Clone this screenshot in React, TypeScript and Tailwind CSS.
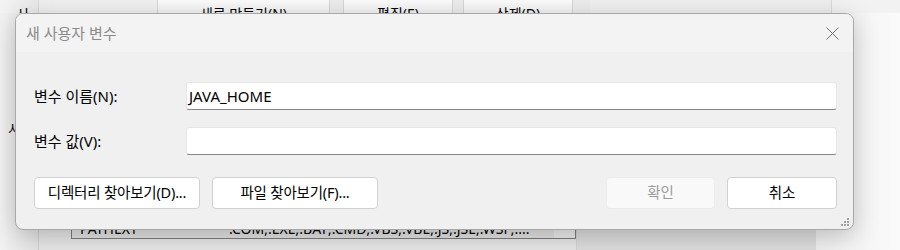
const ui = {
  fontFamily: '"Segoe UI", "Noto Sans", "Noto Sans CJK KR", sans-serif',
};

function BgButton({ label, className }: { label: string; className: string }) {
  return (
    <div
      className={`h-[13px] overflow-hidden border-x border-[#d6d6d6] bg-gradient-to-b from-[#fbfbfb] to-[#f2f2f2] text-center text-[14px] leading-[20px] text-black ${className}`}
    >
      <div className="pt-[4px]">{label}</div>
    </div>
  );
}

function Field({ label, value }: { label: string; value?: string }) {
  return (
    <div className="flex items-center">
      <label className="w-[152px] text-[15px] text-black">{label}</label>
      <div className="flex h-[28px] flex-1 items-center rounded-[3px] border border-[#e6e6e6] border-b-[#868686] bg-white px-[2px] text-[15px] text-black">
        {value}
      </div>
    </div>
  );
}

function DialogButton({
  children,
  className,
  disabled,
}: {
  children: React.ReactNode;
  className: string;
  disabled?: boolean;
}) {
  return (
    <button
      disabled={disabled}
      className={`h-[32px] whitespace-nowrap rounded-[4px] border text-[14.5px] tracking-[-0.2px] ${
        disabled
          ? "border-[#ececec] bg-[#f9f9f9] text-[#9b9b9b]"
          : "border-[#d1d1d1] bg-white text-black"
      } ${className}`}
    >
      {children}
    </button>
  );
}

export default function App() {
  return (
    <div
      className="relative h-[250px] w-[900px] overflow-hidden bg-[#ebebeb]"
      style={ui}
    >
      {/* window behind the dialog */}
      <div className="flex h-full flex-col">
        <div className="flex h-[13px]">
          <div className="w-[38px] bg-gradient-to-r from-[#f4f4f4] to-[#e9e9e9] pl-[16px] text-[14px] leading-[20px]">
            <div className="pt-[4px]">시</div>
          </div>
          <div className="w-[17px] border-l border-[#dadada] bg-[#efefef]" />
          <div className="w-[102px] bg-[#f0f0f0]" />
          <BgButton label="새로 만들기(N)" className="w-[173px]" />
          <div className="w-[13px] bg-[#ececec]" />
          <BgButton label="편집(E)" className="w-[110px]" />
          <div className="w-[10px] bg-[#ececec]" />
          <BgButton label="삭제(D)" className="w-[110px]" />
          <div className="w-[17px] bg-[#ececec]" />
          <div className="w-[242px] border-r border-[#d9d9d9] bg-[#efefef]" />
          <div className="flex-1 bg-[#f2f2f2]" />
        </div>
        <div className="flex flex-1">
          <div className="w-[38px] bg-gradient-to-r from-[#f2f2f2] to-[#e4e4e4] pl-[8px] pt-[105px] text-[14px]">
            시
          </div>
          <div className="flex flex-1 flex-col border-l border-[#d0d0d0] bg-[#e6e6e6]">
            <div className="flex-1" />
            <div className="mb-[11px] ml-[32px] flex h-[30px] w-[505px] items-end border-x border-b border-[#7c7c7c] bg-[#e1e1e1]">
              <div className="flex h-[20px] flex-1 items-center pl-[8px] text-[14px] text-black">
                <span className="w-[149px]">PATHEXT</span>
                <span>.COM;.EXE;.BAT;.CMD;.VBS;.VBE;.JS;.JSE;.WSF;....</span>
              </div>
              <div className="h-[20px] w-[21px] bg-[#ebebeb]" />
            </div>
          </div>
          <div className="w-[240px] border-l border-[#d2d2d2] bg-gradient-to-b from-[#e9e9e9] to-[#dcdcdc]" />
          <div className="flex-1 bg-gradient-to-r from-[#efefef] to-[#fafafa]" />
        </div>
      </div>

      {/* dialog */}
      <div className="absolute left-[15px] top-[13px] flex h-[217px] w-[839px] flex-col overflow-hidden rounded-[8px] border border-[#a8a8a8] bg-[#f0f0f0] shadow-[0_6px_24px_rgba(0,0,0,0.22)]">
        <div className="flex h-[38px] items-center justify-between bg-[#f3f3f3] pl-[10px] pr-[14px]">
          <span className="text-[15px] text-[#8a8a8a]">새 사용자 변수</span>
          <svg width="13" height="13" viewBox="0 0 13 13">
            <path
              d="M0.5 0.5 L12.5 12.5 M12.5 0.5 L0.5 12.5"
              stroke="#707070"
              strokeWidth="1"
              fill="none"
            />
          </svg>
        </div>
        <div className="relative flex flex-1 flex-col pl-[18px] pr-[16px] pt-[30px]">
          <div className="flex flex-col gap-[17px]">
            <Field label="변수 이름(N):" value="JAVA_HOME" />
            <Field label="변수 값(V):" />
          </div>
          <div className="mt-[22px] flex gap-[12px]">
            <DialogButton className="w-[166px]">디렉터리 찾아보기(D)...</DialogButton>
            <DialogButton className="w-[166px]">파일 찾아보기(F)...</DialogButton>
            <div className="flex-1" />
            <DialogButton className="w-[109px]" disabled>
              확인
            </DialogButton>
            <DialogButton className="w-[110px]">취소</DialogButton>
          </div>
          <svg
            className="absolute bottom-[2px] right-[3px]"
            width="10"
            height="10"
            viewBox="0 0 10 10"
          >
            <g fill="#a0a0a0">
              <rect x="7" y="1" width="2" height="2" />
              <rect x="4" y="4" width="2" height="2" />
              <rect x="7" y="4" width="2" height="2" />
              <rect x="1" y="7" width="2" height="2" />
              <rect x="4" y="7" width="2" height="2" />
              <rect x="7" y="7" width="2" height="2" />
            </g>
          </svg>
        </div>
      </div>
    </div>
  );
}
